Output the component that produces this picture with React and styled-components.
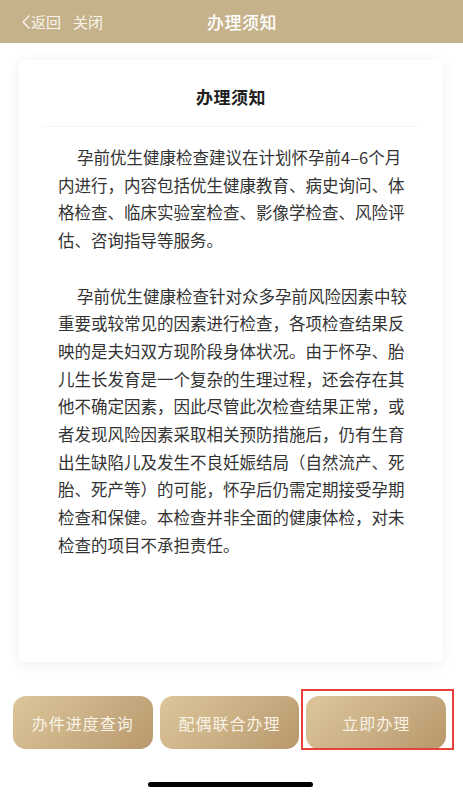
import { createGlobalStyle, styled } from "styled-components";

const GlobalStyle = createGlobalStyle`
  * { box-sizing: border-box; }
  html, body { margin: 0; padding: 0; background: #fff; }
  body {
    font-family: "Noto Sans CJK SC", "Noto Sans", sans-serif;
    -webkit-font-smoothing: antialiased;
  }
`;

const Page = styled.div`
  position: relative;
  width: 463px;
  height: 794px;
  display: flex;
  flex-direction: column;
  overflow: hidden;
`;

const Header = styled.header`
  flex: none;
  height: 43px;
  background: #c6b28a;
  display: grid;
  grid-template-columns: 1fr auto 1fr;
  align-items: center;
  padding: 0 0 0 21px;
  color: #fff;
`;

const NavLinks = styled.div`
  display: flex;
  align-items: center;
  gap: 12px;
  font-size: 15px;
  color: #f8f4ec;
`;

const NavLink = styled.span`
  display: flex;
  align-items: center;
`;

const Title = styled.h1`
  margin: 0;
  font-size: 17px;
  font-weight: 500;
  letter-spacing: 0.5px;
  color: #fff;
`;

const Main = styled.main`
  flex: none;
  padding: 17px 20px 0 19px;
`;

const Card = styled.section`
  height: 602px;
  background: #fff;
  border-radius: 6px;
  box-shadow: 0 2px 14px rgba(0, 0, 0, 0.07);
  padding: 24px 24px 0;
  display: flex;
  flex-direction: column;
  align-items: center;
`;

const CardTitle = styled.h2`
  margin: 0;
  font-size: 17px;
  font-weight: 700;
  color: #1e1e1e;
  letter-spacing: 0.5px;
  line-height: 26px;
  width: 100%;
  text-align: center;
  padding-bottom: 16px;
  border-bottom: 1px solid #f3f3f3;
`;

const Body = styled.div`
  width: 354px;
  margin-top: 17px;
  margin-left: 8px;
`;

const Paragraph = styled.p`
  margin: 0 0 27.7px;
  font-size: 16.5px;
  line-height: 27.7px;
  text-indent: 19px;
  color: #333;
  text-align: left;
  word-break: break-all;
`;

const Actions = styled.div`
  flex: none;
  display: flex;
  gap: 7px;
  padding: 34px 17px 0 13px;
`;

const ActionSlot = styled.div`
  position: relative;
  flex: 1;
  display: flex;
`;

const ActionButton = styled.button`
  flex: 1;
  height: 53px;
  border: none;
  border-radius: 13px;
  background: linear-gradient(135deg, #dcc69a 0%, #c9ae83 55%, #b8976c 100%);
  color: #f8f2e6;
  font-family: inherit;
  font-size: 16px;
  letter-spacing: 1px;
  padding: 0;
`;

const Highlight = styled.div`
  position: absolute;
  left: -5px;
  right: -8px;
  top: -7px;
  bottom: -1px;
  border: 2px solid #e8403a;
  pointer-events: none;
`;

const HomeIndicator = styled.div`
  position: absolute;
  left: 148px;
  bottom: 7px;
  width: 165px;
  height: 5px;
  border-radius: 3px;
  background: #000;
`;

const paragraphs = [
  "孕前优生健康检查建议在计划怀孕前4–6个月内进行，内容包括优生健康教育、病史询问、体格检查、临床实验室检查、影像学检查、风险评估、咨询指导等服务。",
  "孕前优生健康检查针对众多孕前风险因素中较重要或较常见的因素进行检查，各项检查结果反映的是夫妇双方现阶段身体状况。由于怀孕、胎儿生长发育是一个复杂的生理过程，还会存在其他不确定因素，因此尽管此次检查结果正常，或者发现风险因素采取相关预防措施后，仍有生育出生缺陷儿及发生不良妊娠结局（自然流产、死胎、死产等）的可能，怀孕后仍需定期接受孕期检查和保健。本检查并非全面的健康体检，对未检查的项目不承担责任。",
];

const actions = [
  { label: "办件进度查询" },
  { label: "配偶联合办理" },
  { label: "立即办理", marked: true },
];

export default function App() {
  return (
    <>
      <GlobalStyle />
      <Page>
        <Header>
          <NavLinks>
            <NavLink>
              <svg width="10" height="16" viewBox="0 0 10 16" fill="none">
                <path d="M8.5 1.5 L2 8 L8.5 14.5" stroke="#f8f4ec" strokeWidth="1.4" />
              </svg>
              返回
            </NavLink>
            <NavLink>关闭</NavLink>
          </NavLinks>
          <Title>办理须知</Title>
          <span />
        </Header>
        <Main>
          <Card>
            <CardTitle>办理须知</CardTitle>
            <Body>
              {paragraphs.map((text, i) => (
                <Paragraph key={i}>{text}</Paragraph>
              ))}
            </Body>
          </Card>
        </Main>
        <Actions>
          {actions.map((a) => (
            <ActionSlot key={a.label}>
              <ActionButton>{a.label}</ActionButton>
              {a.marked && <Highlight />}
            </ActionSlot>
          ))}
        </Actions>
        <HomeIndicator />
      </Page>
    </>
  );
}
